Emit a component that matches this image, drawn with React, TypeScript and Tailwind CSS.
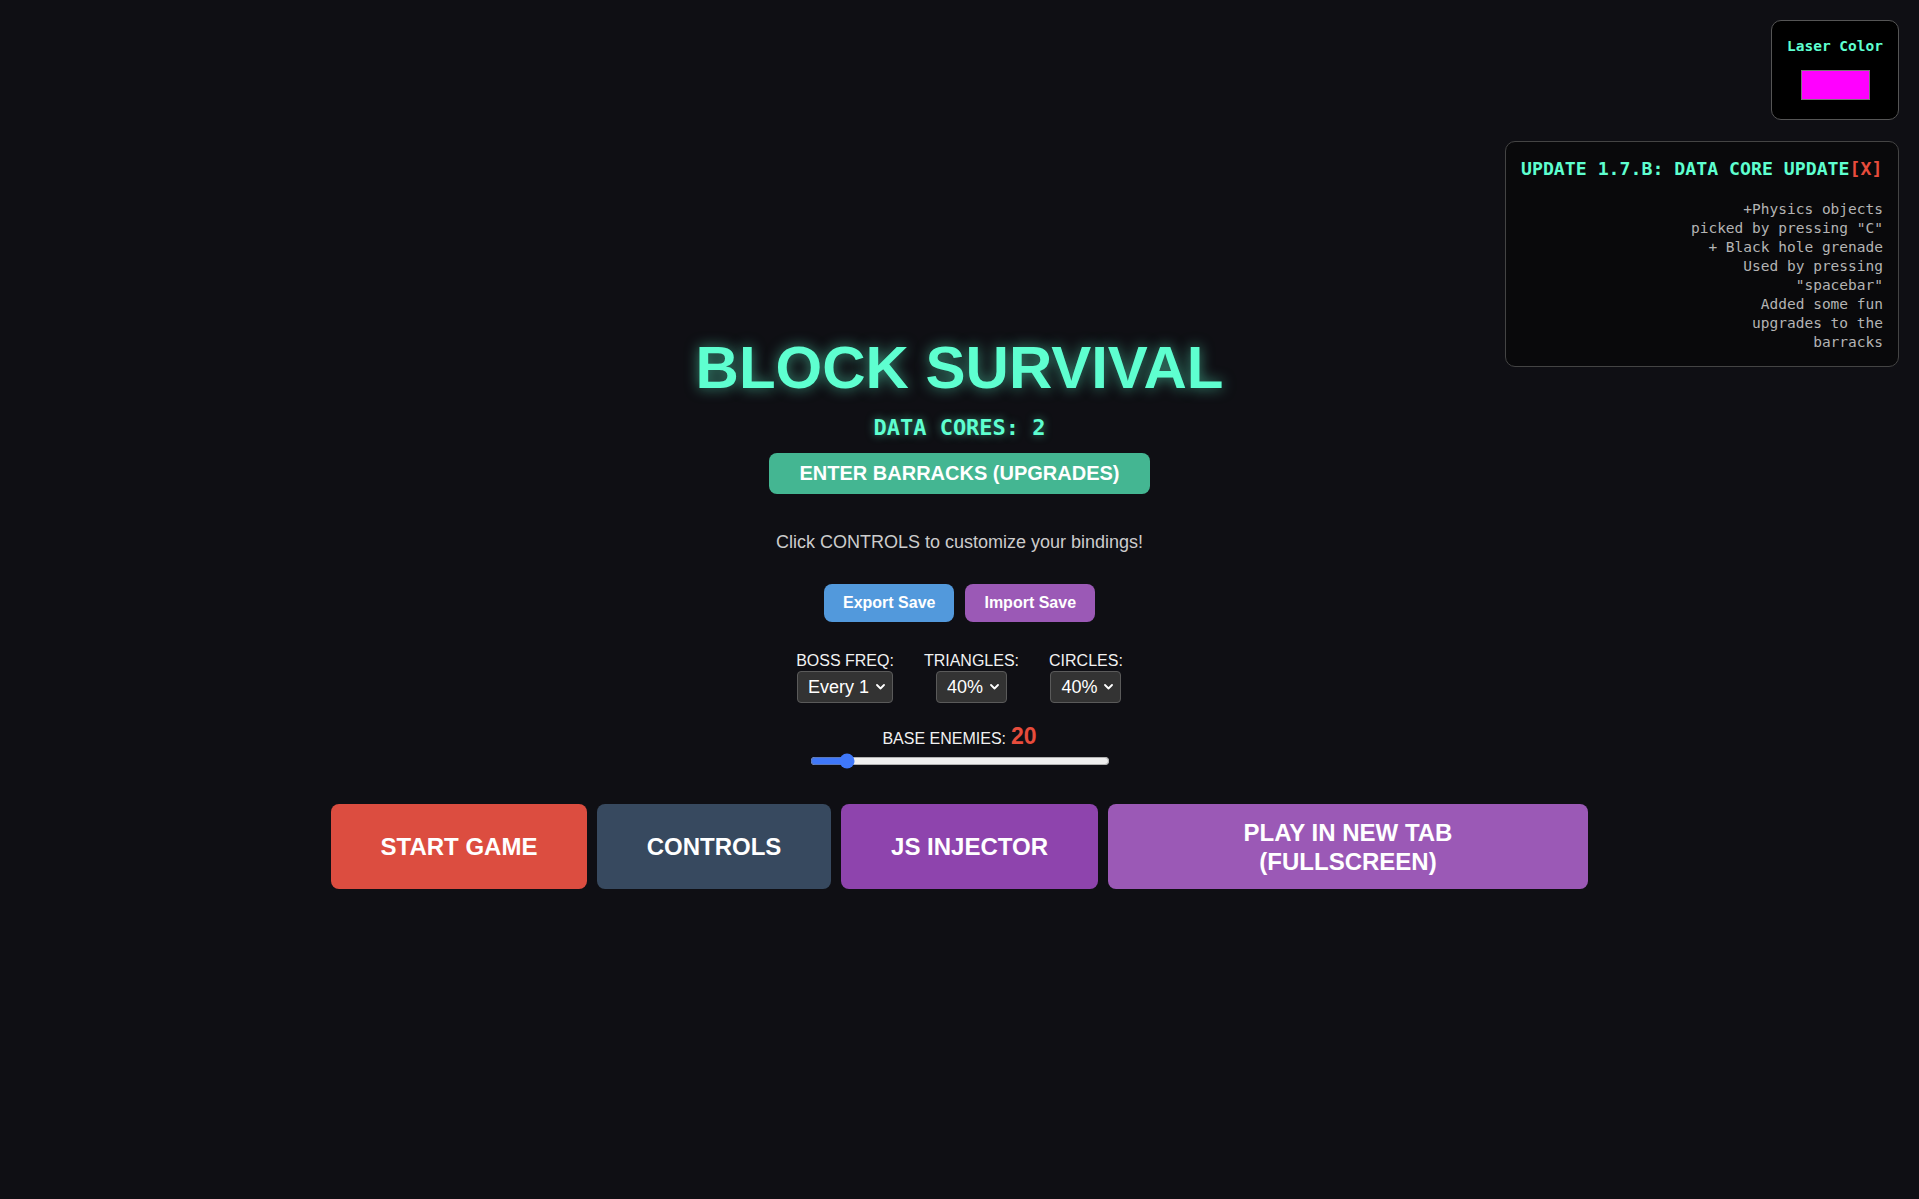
import React from 'react';

const mono = '[font-family:"DejaVu_Sans_Mono","Liberation_Mono",monospace]';

function Chevron() {
  return (
    <svg
      className="pointer-events-none absolute right-[8px] top-1/2 -translate-y-1/2"
      width="9"
      height="6"
      viewBox="0 0 9 6"
      fill="none"
    >
      <path d="M1 1l3.5 3.5L8 1" stroke="#ffffff" strokeWidth="1.8" strokeLinecap="round" strokeLinejoin="round" />
    </svg>
  );
}

interface PickProps {
  label: string;
  options: string[];
  value: string;
}

function Pick({ label, options, value }: PickProps) {
  return (
    <div className="flex flex-col items-center">
      <span className="text-[16px] leading-[19px] text-[#f2f2f2]">{label}</span>
      <div className="relative mt-[1px]">
        <select
          defaultValue={value}
          className="h-[32px] appearance-none rounded-[4px] border border-[#5a5a5a] bg-[#333333] pl-[10px] pr-[22px] text-[18px] text-white outline-none"
        >
          {options.map((o) => (
            <option key={o} value={o}>
              {o}
            </option>
          ))}
        </select>
        <Chevron />
      </div>
    </div>
  );
}

function LaserColor() {
  return (
    <div className="flex h-[100px] w-[128px] flex-col items-center rounded-[10px] border border-[#555] bg-black pt-[15px]">
      <span className={`${mono} text-[14.5px] font-bold leading-[20px] text-[#5effd0]`}>Laser Color</span>
      <div className="mt-[14px] h-[30px] w-[69px] border border-[#777] bg-[#ff00ff]" />
    </div>
  );
}

const notes = [
  '+Physics objects',
  'picked by pressing "C"',
  '+ Black hole grenade',
  'Used by pressing',
  '"spacebar"',
  'Added some fun',
  'upgrades to the',
  'barracks',
];

function UpdatePanel() {
  return (
    <div className={`${mono} w-[394px] rounded-[10px] border border-[#444] bg-[#09090b] px-[15px] pb-[14px] pt-[16px]`}>
      <div className="whitespace-nowrap text-[18.2px] font-bold leading-[21px] text-[#5effd0]">
        UPDATE 1.7.B: DATA CORE UPDATE<span className="text-[#e74c3c]">[X]</span>
      </div>
      <div className="mt-[21px] text-right text-[14.5px] leading-[19px] text-[#b4b4b4]">
        {notes.map((n) => (
          <div key={n}>{n}</div>
        ))}
      </div>
    </div>
  );
}

export default function App() {
  return (
    <div className="relative min-h-screen bg-[#0f0f14] [font-family:'Liberation_Sans',Arial,sans-serif]">
      <div className="absolute right-[20px] top-[20px] flex flex-col items-end gap-[21px]">
        <LaserColor />
        <UpdatePanel />
      </div>

      <div className="flex flex-col items-center pt-[334px]">
        <h1 className="text-[60px] font-bold leading-[68px] text-[#5effd0] [text-shadow:0_0_14px_rgba(94,255,208,0.55)]">
          BLOCK SURVIVAL
        </h1>
        <div className={`${mono} mt-[13px] text-[22px] font-bold leading-[26px] text-[#5effd0] [text-shadow:0_0_8px_rgba(94,255,208,0.5)]`}>
          DATA CORES: 2
        </div>
        <button className="mt-[12px] rounded-[8px] bg-[#44b692] px-[30px] py-[9px] text-[20px] font-bold leading-[23px] text-white">
          ENTER BARRACKS (UPGRADES)
        </button>

        <p className="mt-[38px] text-[18px] leading-[21px] text-[#cccccc]">Click CONTROLS to customize your bindings!</p>

        <div className="mt-[31px] flex gap-[11px]">
          <button className="rounded-[8px] bg-[#5299dc] px-[19px] py-[10px] text-[16px] font-bold leading-[18px] text-white">
            Export Save
          </button>
          <button className="rounded-[8px] bg-[#9b59b6] px-[19px] py-[10px] text-[16px] font-bold leading-[18px] text-white">
            Import Save
          </button>
        </div>

        <div className="mt-[29px] flex items-start gap-[30px]">
          <Pick label="BOSS FREQ:" options={['Every 1', 'Every 2', 'Every 3', 'Every 5']} value="Every 1" />
          <Pick label="TRIANGLES:" options={['0%', '20%', '40%', '60%']} value="40%" />
          <Pick label="CIRCLES:" options={['0%', '20%', '40%', '60%']} value="40%" />
        </div>

        <div className="mt-[19px] flex items-baseline gap-[5px] leading-[28px]">
          <span className="text-[16px] text-[#f2f2f2]">BASE ENEMIES:</span>
          <span className="text-[23px] font-bold text-[#e74c3c]">20</span>
        </div>
        <input type="range" min={5} max={150} defaultValue={20} className="m-0 block h-4 w-[300px] accent-[#3f78fa]" />

        <div className="mt-[35px] flex gap-[10px]">
          <button className="h-[85px] w-[256px] rounded-[8px] bg-[#dc4d40] text-[24px] font-bold leading-[29px] text-white">
            START GAME
          </button>
          <button className="h-[85px] w-[234px] rounded-[8px] bg-[#37495f] text-[24px] font-bold leading-[29px] text-white">
            CONTROLS
          </button>
          <button className="h-[85px] w-[257px] rounded-[8px] bg-[#8e44ad] text-[24px] font-bold leading-[29px] text-white">
            JS INJECTOR
          </button>
          <button className="h-[85px] w-[480px] rounded-[8px] bg-[#9b59b6] px-[50px] text-[24px] font-bold leading-[29px] text-white">
            PLAY IN NEW TAB (FULLSCREEN)
          </button>
        </div>
      </div>
    </div>
  );
}
